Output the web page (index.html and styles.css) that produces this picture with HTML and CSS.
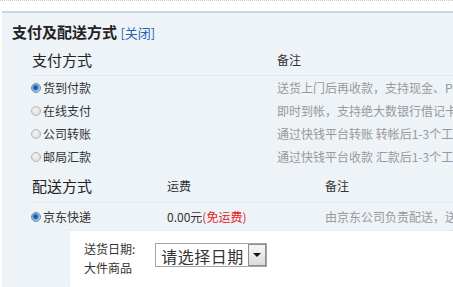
FILE: index.html
```html
<!DOCTYPE html>
<html lang="zh-CN">

<head>
    <meta charset="UTF-8">
    <title>支付及配送方式</title>
    <link rel="stylesheet" href="styles.css">
</head>

<body>
    <div class="topbar"></div>

    <div class="panel">
        <h3 class="panel-title">支付及配送方式 <a href="#" class="close-link">[关闭]</a></h3>

        <!-- 支付方式 -->
        <table class="opt-table pay-table">
            <tr class="head-row">
                <th class="col-name">支付方式</th>
                <th class="col-note">备注</th>
            </tr>
            <tr>
                <td><label><input type="radio" name="pay" checked>货到付款</label></td>
                <td class="note">送货上门后再收款，支持现金、POS机刷卡、支票支付</td>
            </tr>
            <tr>
                <td><label><input type="radio" name="pay">在线支付</label></td>
                <td class="note">即时到帐，支持绝大数银行借记卡及部分银行信用卡</td>
            </tr>
            <tr>
                <td><label><input type="radio" name="pay">公司转账</label></td>
                <td class="note">通过快钱平台转账 转帐后1-3个工作日内到帐</td>
            </tr>
            <tr>
                <td><label><input type="radio" name="pay">邮局汇款</label></td>
                <td class="note">通过快钱平台收款 汇款后1-3个工作日到帐</td>
            </tr>
        </table>

        <!-- 配送方式 -->
        <table class="opt-table ship-table">
            <tr class="head-row">
                <th class="col-name">配送方式</th>
                <th class="col-fee">运费</th>
                <th class="col-note">备注</th>
            </tr>
            <tr>
                <td><label><input type="radio" name="ship" checked>京东快递</label></td>
                <td>0.00元<span class="free">(免运费)</span></td>
                <td class="note">由京东公司负责配送，送货上门</td>
            </tr>
        </table>

        <div class="date-box">
            <div class="date-labels">
                <span>送货日期:</span>
                <span>大件商品</span>
            </div>
            <div class="date-select">
                <select>
                    <option>请选择日期</option>
                </select>
                <span class="arrow"></span>
            </div>
        </div>
    </div>
</body>

</html>
```

FILE: styles.css
```css
body {
    margin: 0;
    width: 453px;
    height: 287px;
    overflow: hidden;
    font-family: "Noto Sans CJK SC", "DejaVu Sans", sans-serif;
    font-size: 12px;
    color: #333;
    background-color: #fff;
}

.topbar {
    height: 10px;
    border-top: 1px dotted #c8c8c8;
}

.panel {
    margin-left: 2px;
    background-color: #eef3f8;
    border-top: 2px solid #c5d8e6;
    padding: 9px 0 0 10px;
    height: 265px;
    overflow: hidden;
}

.panel-title {
    margin: 0;
    font-size: 15px;
    font-weight: bold;
    color: #222;
    line-height: 20px;
}

.close-link {
    font-size: 13px;
    font-weight: normal;
    color: #2b62b0;
    text-decoration: none;
}

.opt-table {
    border-collapse: collapse;
    table-layout: fixed;
    width: 700px;
    white-space: nowrap;
    margin-left: 18px;
}

.opt-table th {
    text-align: left;
    font-weight: normal;
    padding: 0;
}

.opt-table td {
    padding: 0;
    height: 23px;
}

.head-row th.col-name {
    font-size: 15px;
    color: #222;
    padding-left: 2px;
}

.pay-table {
    margin-top: 5px;
}

.pay-table .head-row th {
    height: 23px;
    padding-bottom: 4px;
    border-bottom: 1px solid #e3eaf1;
}

.pay-table .col-name {
    width: 245px;
}

.ship-table .head-row th {
    height: 34px;
    border-bottom: 1px solid #e3eaf1;
}

.ship-table td {
    height: 27px;
}

.ship-table .col-name {
    width: 135px;
}

.ship-table .col-fee {
    width: 158px;
}

.note {
    color: #999;
}

.free {
    color: #e4231a;
}

label {
    display: flex;
    align-items: center;
}

input[type="radio"] {
    appearance: none;
    width: 10px;
    height: 10px;
    margin: 0 2px 0 1px;
    border-radius: 50%;
    border: 1px solid #b8b8b8;
    background: radial-gradient(circle at 40% 40%, #f4f4f4, #d4d4d4);
}

input[type="radio"]:checked {
    border-color: #7d8ea3;
    background: radial-gradient(circle at 45% 45%, #2d3f78 0, #1c6fc9 30%, #9fc4e8 60%, #e4ecf4 100%);
}

.date-box {
    margin-left: 57px;
    background-color: #fff;
    border-top: 1px dotted #d6dee8;
    border-left: 1px dotted #d6dee8;
    padding: 8px 0 0 14px;
    height: 80px;
    display: flex;
    gap: 20px;
}

.date-labels {
    display: flex;
    flex-direction: column;
    line-height: 19px;
}

.date-select {
    display: flex;
    align-self: flex-start;
    margin-top: 4px;
    border: 1px solid #a5a5a5;
    height: 22px;
}

.date-select select {
    appearance: none;
    border: none;
    background: #fff;
    font-family: inherit;
    font-size: 16px;
    color: #333;
    padding: 0 4px 0 5px;
    height: 22px;
    letter-spacing: 0.5px;
}

.arrow {
    width: 16px;
    height: 20px;
    border: 1px solid #8d8d8d;
    background: linear-gradient(#f7f7f7, #dadada);
    position: relative;
}

.arrow::after {
    content: "";
    position: absolute;
    left: 4px;
    top: 8px;
    border-left: 4px solid transparent;
    border-right: 4px solid transparent;
    border-top: 4px solid #111;
}
```
